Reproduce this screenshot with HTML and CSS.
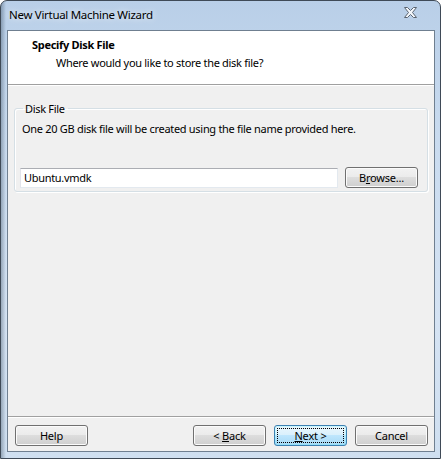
FILE: index.html
```html
<!DOCTYPE html>
<html lang="en">
<head>
    <meta charset="UTF-8">
    <title>New Virtual Machine Wizard</title>
    <link rel="stylesheet" href="styles.css">
</head>
<body>
    <div class="window">
        <div class="titlebar">
            <span class="title">New Virtual Machine Wizard</span>
            <svg class="close" width="13" height="11" viewBox="0 0 13 11">
                <path d="M0.5 0.5 H3.5 L6.5 3.5 L9.5 0.5 H12.5 L8.5 5.5 L12.5 10.5 H9.5 L6.5 7.5 L3.5 10.5 H0.5 L4.5 5.5 Z"
                      fill="#f4f7fb" stroke="#5a6470" stroke-width="1"/>
            </svg>
        </div>

        <div class="client">
            <div class="header">
                <div class="header-title">Specify Disk File</div>
                <div class="header-sub">Where would you like to store the disk file?</div>
            </div>

            <div class="content">
                <fieldset class="group">
                    <legend>Disk File</legend>
                    <p class="note">One 20 GB disk file will be created using the file name provided here.</p>
                    <div class="file-row">
                        <div class="textbox">Ubuntu.vmdk</div>
                        <button class="btn">B<u>r</u>owse...</button>
                    </div>
                </fieldset>
            </div>

            <div class="footer">
                <button class="btn">Help</button>
                <div class="spacer"></div>
                <button class="btn">&lt; <u>B</u>ack</button>
                <button class="btn default"><span class="focus"><u>N</u>ext &gt;</span></button>
                <button class="btn">Cancel</button>
            </div>
        </div>
    </div>
</body>
</html>
```

FILE: styles.css
```css
* {
    margin: 0;
    padding: 0;
    box-sizing: border-box;
}

body {
    background: #ffffff;
    font-family: 'Noto Sans', 'Open Sans', sans-serif;
    font-size: 11px;
    letter-spacing: -0.3px;
    color: #000;
}

.window {
    width: 441px;
    height: 459px;
    border: 1px solid #3f4a57;
    border-radius: 7px 7px 0 0;
    padding: 0 5px 6px 6px;
    display: flex;
    flex-direction: column;
    background:
        linear-gradient(90deg, rgba(40, 60, 80, 0.35) 0px, rgba(255, 255, 255, 0) 5px),
        linear-gradient(180deg, #b9cfe8 0%, #c9dbef 30%, #d5e3f3 70%, #cfdff0 100%);
}

.titlebar {
    height: 29px;
    display: flex;
    align-items: center;
    justify-content: space-between;
    padding: 0 18px 2px 2px;
}

.title {
    font-size: 11.5px;
    color: #000;
    text-shadow: 0 0 6px rgba(255, 255, 255, 0.9);
}

.close {
    display: block;
    margin-top: -5px;
}

.client {
    flex: 1;
    display: flex;
    flex-direction: column;
    border: 1px solid #6f7f90;
    background: #f0f0f0;
}

.header {
    height: 54px;
    background: #ffffff;
    border-bottom: 1px solid #a0a0a0;
    box-shadow: 0 1px 0 #ffffff;
    padding: 5px 0 0 24px;
}

.header-title {
    font-weight: bold;
    line-height: 18px;
}

.header-sub {
    padding-left: 24px;
    line-height: 17px;
}

.content {
    flex: 1;
    padding: 16px 6px 0 6px;
}

.group {
    border: 1px solid #d5dfe5;
    border-radius: 3px;
    box-shadow: inset 1px 1px 0 #ffffff, 1px 1px 0 #ffffff;
    padding: 5px 9px 3px 5px;
}

.group legend {
    margin-left: 3px;
    padding: 0 3px 0 2px;
    line-height: 15px;
}

.note {
    padding-left: 2px;
    line-height: 16px;
}

.file-row {
    display: flex;
    align-items: center;
    gap: 7px;
    margin-top: 30px;
}

.textbox {
    flex: 1;
    height: 20px;
    border: 1px solid #abadb3;
    border-color: #abadb3 #e3e9ef #e3e9ef #e2e3ea;
    background: #ffffff;
    padding: 0 3px;
    line-height: 18px;
}

.btn {
    width: 73px;
    height: 21px;
    font-family: inherit;
    font-size: 11px;
    letter-spacing: -0.2px;
    color: #000;
    border: 1px solid #707070;
    border-radius: 3px;
    box-shadow: inset 0 0 0 1px #fbfbfb;
    background: linear-gradient(180deg, #f2f2f2 0%, #ebebeb 49%, #dddddd 50%, #cfcfcf 100%);
}

.btn u {
    text-decoration-thickness: 1px;
    text-underline-offset: 1px;
}

.default {
    border-color: #3c7fb1;
    box-shadow: inset 0 0 0 1px #48fbff33;
    background: linear-gradient(180deg, #eaf6fd 0%, #d9f0fc 49%, #bee6fd 50%, #a7d9f5 100%);
    padding: 2px;
}

.focus {
    display: block;
    height: 100%;
    border: 1px dotted #000;
    line-height: 13px;
}

.footer {
    height: 35px;
    border-top: 1px solid #a0a0a0;
    box-shadow: inset 0 1px 0 #ffffff;
    display: flex;
    align-items: flex-start;
    gap: 8px;
    padding: 8px 6px 0 7px;
}

.spacer {
    flex: 1;
}
```
